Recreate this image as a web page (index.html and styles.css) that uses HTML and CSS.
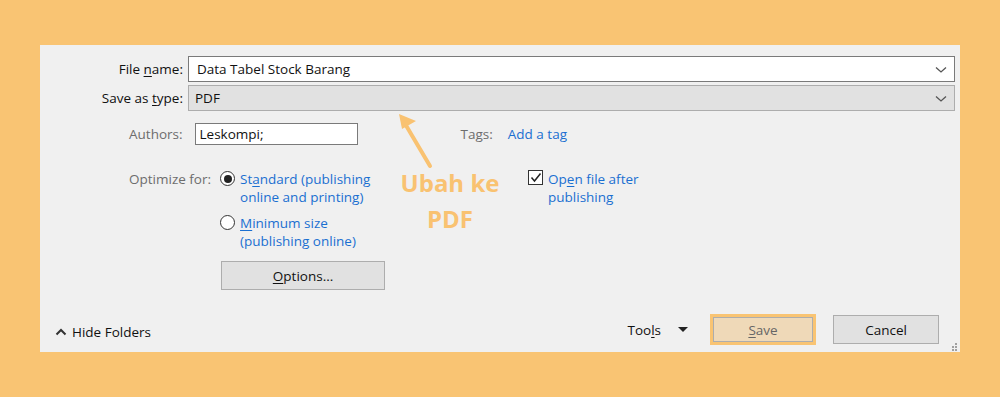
FILE: index.html
```html
<!DOCTYPE html>
<html lang="en">
<head>
    <meta charset="UTF-8">
    <title>Save as PDF</title>
    <link rel="stylesheet" href="styles.css">
</head>
<body>
    <div class="dialog">
        <div class="field-row">
            <label class="main-label">File <u>n</u>ame:</label>
            <div class="combo white">
                <span>Data Tabel Stock Barang</span>
                <svg class="chev" width="12" height="8" viewBox="0 0 12 8"><path d="M1 1.5 L6 6 L11 1.5" fill="none" stroke="#555" stroke-width="1.3"/></svg>
            </div>
        </div>
        <div class="field-row">
            <label class="main-label">Save as <u>t</u>ype:</label>
            <div class="combo grey">
                <span>PDF</span>
                <svg class="chev" width="12" height="8" viewBox="0 0 12 8"><path d="M1 1.5 L6 6 L11 1.5" fill="none" stroke="#555" stroke-width="1.3"/></svg>
            </div>
        </div>

        <div class="meta-row">
            <span class="muted">Authors:</span>
            <div class="text-box">Leskompi;</div>
            <span class="muted tags">Tags:</span>
            <a class="link">Add a tag</a>
        </div>

        <div class="options-area">
            <span class="muted optimize">Optimize for:</span>
            <div class="radios">
                <div class="radio-item">
                    <span class="radio checked"></span>
                    <span class="link">St<u>a</u>ndard (publishing<br>online and printing)</span>
                </div>
                <div class="radio-item">
                    <span class="radio"></span>
                    <span class="link"><u>M</u>inimum size<br>(publishing online)</span>
                </div>
                <button class="btn options-btn"><u>O</u>ptions...</button>
            </div>
            <div class="check-item">
                <span class="checkbox">
                    <svg width="12" height="11" viewBox="0 0 12 11"><path d="M1.5 5.5 L4.5 9 L10.5 1.5" fill="none" stroke="#222" stroke-width="1.5"/></svg>
                </span>
                <span class="link">Op<u>e</u>n file after<br>publishing</span>
            </div>
        </div>

        <div class="footer">
            <div class="hide-folders">
                <svg width="12" height="8" viewBox="0 0 12 8"><path d="M1.5 6.5 L6 2 L10.5 6.5" fill="none" stroke="#333" stroke-width="2"/></svg>
                <span>Hide Folders</span>
            </div>
            <div class="actions">
                <span class="tools">Too<u>l</u>s</span>
                <svg class="caret" width="10" height="6" viewBox="0 0 10 6"><path d="M0 0 L10 0 L5 5 Z" fill="#222"/></svg>
                <button class="btn save-btn"><u>S</u>ave</button>
                <button class="btn cancel-btn">Cancel</button>
            </div>
        </div>

        <svg class="grip" width="8" height="8" viewBox="0 0 8 8">
            <rect x="5" y="0" width="2" height="2" fill="#a0a0a0"/>
            <rect x="5" y="3" width="2" height="2" fill="#a0a0a0"/>
            <rect x="2" y="3" width="2" height="2" fill="#a0a0a0"/>
            <rect x="5" y="6" width="2" height="2" fill="#a0a0a0"/>
            <rect x="2" y="6" width="2" height="2" fill="#a0a0a0"/>
        </svg>

        <!-- annotation -->
        <svg class="arrow" width="50" height="70" viewBox="0 0 50 70">
            <path d="M34 54 L8 10" stroke="#f9c271" stroke-width="4" stroke-linecap="round" fill="none"/>
            <path d="M3 2 L20 9 L6 17 Z" fill="#f9c271"/>
        </svg>
        <div class="note">Ubah ke<br>PDF</div>
    </div>
</body>
</html>
```

FILE: styles.css
```css
body {
    margin: 0;
    background-color: #f9c473;
    font-family: "Open Sans", "Noto Sans", Arial, sans-serif;
    font-size: 13.5px;
    color: #111;
}

.dialog {
    position: relative;
    box-sizing: border-box;
    margin: 45px 40px 0 40px;
    width: 920px;
    height: 307px;
    background-color: #f0f0f0;
    padding: 11px 5px 0 0;
}

u {
    text-decoration-thickness: 1px;
    text-underline-offset: 2px;
}

.field-row {
    display: flex;
    align-items: center;
    margin-bottom: 3px;
}

.main-label {
    width: 143px;
    text-align: right;
    padding-right: 5px;
    box-sizing: content-box;
}

.combo {
    flex: 1;
    height: 26px;
    box-sizing: border-box;
    display: flex;
    align-items: center;
    justify-content: space-between;
    padding: 0 7px 0 6px;
}

.combo.white {
    background: #fff;
    border: 1px solid #7a7a7a;
    padding-left: 8px;
}

.combo.grey {
    background: #e1e1e1;
    border: 1px solid #adadad;
}

.chev {
    margin-top: 1px;
}

.muted {
    color: #6d6d6d;
}

.link {
    color: #1a6fd1;
    cursor: pointer;
}

.meta-row {
    display: flex;
    align-items: center;
    margin-top: 12px;
    padding-left: 89px;
    height: 22px;
}

.text-box {
    margin-left: 12px;
    width: 163px;
    height: 22px;
    box-sizing: border-box;
    background: #fff;
    border: 1px solid #7a7a7a;
    padding: 1px 4px;
    line-height: 18px;
}

.tags {
    margin-left: 103px;
}

.meta-row .link {
    margin-left: 15px;
}

.options-area {
    display: flex;
    align-items: flex-start;
    margin-top: 25px;
    padding-left: 89px;
    line-height: 18px;
}

.optimize {
    margin-right: 9px;
}

.radios {
    display: flex;
    flex-direction: column;
}

.radio-item {
    display: flex;
    align-items: flex-start;
    margin-bottom: 8px;
}

.radio {
    width: 15px;
    height: 15px;
    box-sizing: border-box;
    border: 1px solid #333;
    border-radius: 50%;
    background: #fff;
    margin: 1px 5px 0 0;
    display: flex;
    align-items: center;
    justify-content: center;
}

.radio.checked::after {
    content: "";
    width: 8px;
    height: 8px;
    border-radius: 50%;
    background: #222;
}

.btn {
    font-family: inherit;
    font-size: inherit;
    color: #111;
    background: #e1e1e1;
    border: 1px solid #adadad;
    padding: 0;
    height: 28px;
    cursor: pointer;
}

.options-btn {
    width: 164px;
    height: 29px;
    margin-left: 1px;
    margin-top: 3px;
}

.check-item {
    display: flex;
    align-items: flex-start;
    margin-left: 143px;
}

.checkbox {
    width: 15px;
    height: 15px;
    box-sizing: border-box;
    border: 1px solid #333;
    background: #fff;
    margin: 0 5px 0 0;
    display: flex;
    align-items: center;
    justify-content: center;
}

.footer {
    position: absolute;
    left: 0;
    right: 0;
    bottom: 8px;
    display: flex;
    justify-content: space-between;
    align-items: center;
    padding: 0 21px 0 15px;
}

.hide-folders {
    display: flex;
    align-items: center;
    gap: 5px;
    margin-top: 5px;
}

.actions {
    display: flex;
    align-items: center;
}

.tools {
    margin-right: 17px;
}

.caret {
    margin-right: 25px;
}

.save-btn {
    width: 100px;
    height: 25px;
    background: #efd9b8;
    border: 1px solid #adadad;
    outline: 3px solid #f9c473;
    color: #666;
    margin-right: 20px;
}

.cancel-btn {
    width: 106px;
    height: 29px;
}

.grip {
    position: absolute;
    right: 2px;
    bottom: 1px;
}

.arrow {
    position: absolute;
    left: 356px;
    top: 67px;
}

.note {
    position: absolute;
    left: 350px;
    top: 120px;
    width: 120px;
    text-align: center;
    color: #f9c271;
    font-family: "Open Sans", "Noto Sans", sans-serif;
    font-weight: bold;
    font-size: 24px;
    line-height: 36px;
}
```
